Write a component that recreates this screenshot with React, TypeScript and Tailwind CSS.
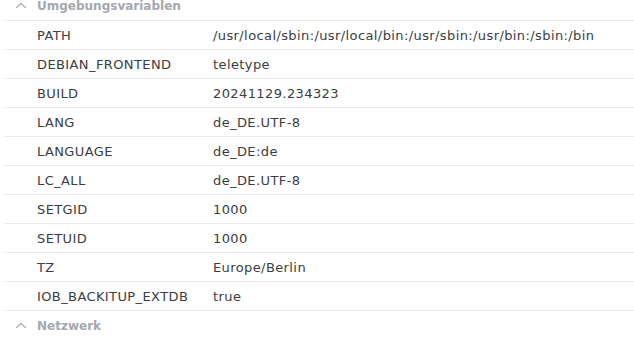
import React from "react";

const rows: [string, string][] = [
  ["PATH", "/usr/local/sbin:/usr/local/bin:/usr/sbin:/usr/bin:/sbin:/bin"],
  ["DEBIAN_FRONTEND", "teletype"],
  ["BUILD", "20241129.234323"],
  ["LANG", "de_DE.UTF-8"],
  ["LANGUAGE", "de_DE:de"],
  ["LC_ALL", "de_DE.UTF-8"],
  ["SETGID", "1000"],
  ["SETUID", "1000"],
  ["TZ", "Europe/Berlin"],
  ["IOB_BACKITUP_EXTDB", "true"],
];

function Chevron() {
  return (
    <svg width="12" height="7" viewBox="0 0 12 7" className="block">
      <polyline points="1,6 6,1.5 11,6" fill="none" stroke="#b0b3b8" strokeWidth="1.4" />
    </svg>
  );
}

function Header({ title, top }: { title: string; top?: boolean }) {
  return (
    <div className={`flex h-[29px] items-center ${top ? "-mt-[9px]" : "border-t border-[#e8eaee]"}`}>
      <div className="w-[32px] flex justify-start pl-[10px]">
        <Chevron />
      </div>
      <span className="pt-[1px] text-[12px] font-bold text-[#a4a8ae]">{title}</span>
    </div>
  );
}

export default function App() {
  return (
    <div
      className="w-[634px] h-[337px] overflow-hidden bg-white"
      style={{ fontFamily: '"DejaVu Sans", Verdana, sans-serif' }}
    >
      <div className="ml-[5px]">
        <Header title="Umgebungsvariablen" top />
        {rows.map(([k, v]) => (
          <div
            key={k}
            className="flex h-[29px] items-center border-t border-[#e8eaee] pt-[2px] text-[13px] tracking-[0.4px] text-[#3a3d42]"
          >
            <div className="w-[208px] pl-[32px]">{k}</div>
            <div>{v}</div>
          </div>
        ))}
        <Header title="Netzwerk" />
      </div>
    </div>
  );
}
